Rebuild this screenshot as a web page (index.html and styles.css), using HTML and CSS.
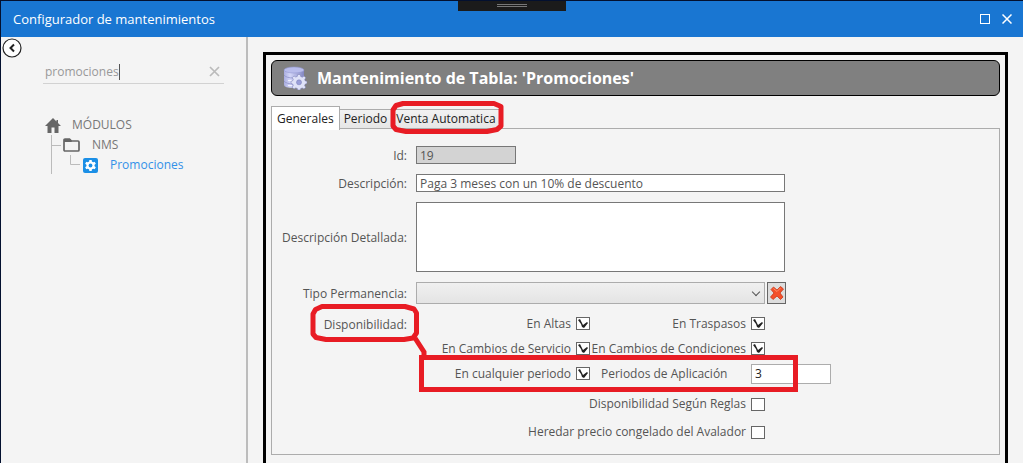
FILE: index.html
```html
<!DOCTYPE html>
<html lang="es">
<head>
<meta charset="utf-8">
<title>Configurador de mantenimientos</title>
<link rel="stylesheet" href="styles.css">
</head>
<body>
<div class="window">
  <header class="titlebar">
    <h1 class="titlebar-text">Configurador de mantenimientos</h1>
    <div class="titlebar-buttons">
      <button class="icon-button" type="button" aria-label="Maximizar"><svg width="10" height="10" viewBox="0 0 10 10"><rect x=".5" y=".5" width="9" height="9" fill="none" stroke="#fff"/></svg></button>
      <button class="icon-button" type="button" aria-label="Cerrar"><svg width="10" height="10" viewBox="0 0 10 10"><path d="M.5 .5L9.500 9.500M9.500 .5L.5 9.500" stroke="#fff" stroke-width="1.500"/></svg></button>
    </div>
    <div class="grip"><span class="grip-line"></span><span class="grip-line"></span></div>
  </header>
  <div class="body">
    <aside class="sidebar">
      <button class="icon-button back" type="button" aria-label="Contraer"><svg width="20" height="20" viewBox="0 0 20 20"><circle cx="10" cy="10" r="9" fill="#fff" stroke="#222" stroke-width="1.200"/><path d="M12 6.500L8.500 10L12 13.500" fill="none" stroke="#222" stroke-width="2"/></svg></button>
      <div class="search">
        <input class="search-input" type="text" value="promociones" aria-label="Buscar"><span class="caret"></span>
        <button class="icon-button clear" type="button" aria-label="Borrar"><svg width="11" height="11" viewBox="0 0 11 11"><path d="M1 1L10 10M10 1L1 10" stroke="#bbb" stroke-width="1.700"/></svg></button>
      </div>
      <ul class="tree">
        <li class="tree-row root"><svg width="16" height="15" viewBox="0 0 16 15"><path d="M8 0L0 8H2.500V15H6.500V9.500H9.500V15H13.500V8H16L13 5V2H11.500V3.500Z" fill="#666"/></svg><span>MÓDULOS</span></li>
        <li class="tree-row folder"><svg width="10" height="20" viewBox="0 0 10 20"><path d="M.5 0V20M.5 10.500H10" fill="none" stroke="#bbb"/></svg><svg width="17" height="14" viewBox="0 0 17 14"><path d="M2 1H6.500L8.500 3H15Q16 3 16 4V12Q16 13 15 13H2Q1 13 1 12V2Q1 1 2 1Z" fill="none" stroke="#666" stroke-width="1.700"/><path d="M1 1H7L9 4H1Z" fill="#666"/></svg><span>NMS</span></li>
        <li class="tree-row leaf"><svg width="30" height="20" viewBox="0 0 30 20"><path d="M.5 0V19M19.500 0V9.500H29" fill="none" stroke="#bbb"/></svg><svg width="15" height="15" viewBox="0 0 15 15"><rect width="15" height="15" rx="2" fill="#1b8fe6"/><g fill="#fff"><circle cx="7.500" cy="7.500" r="4"/><path d="M6.300 2H8.700L9 5H6ZM6.300 13H8.700L9 10H6Z"/><path d="M6.300 2H8.700L9 5H6ZM6.300 13H8.700L9 10H6Z" transform="rotate(60 7.500 7.500)"/><path d="M6.300 2H8.700L9 5H6ZM6.300 13H8.700L9 10H6Z" transform="rotate(120 7.500 7.500)"/></g><circle cx="7.500" cy="7.500" r="1.900" fill="#1b8fe6"/></svg><a class="tree-link" href="#promociones">Promociones</a></li>
      </ul>
    </aside>
    <main class="main">
      <div class="frame">
        <div class="banner">
          <svg width="24" height="24" viewBox="0 0 24 24"><defs><linearGradient id="disk"><stop offset="0" stop-color="#a9addf"/><stop offset=".3" stop-color="#d3d6f8"/><stop offset="1" stop-color="#8286c2"/></linearGradient></defs><path d="M1 4V19Q1 22 11 22T21 19V4Z" fill="url(#disk)"/><ellipse cx="11" cy="4" rx="10" ry="3" fill="#b9bdec" stroke="#9498d2" stroke-width=".6"/><path d="M1 9Q3 12 11 12T21 9M1 15Q3 18 11 18" fill="none" stroke="#9094cc" stroke-width=".8"/><path d="M5 14.500H9M5 19.500H9" stroke="#f0f1ff"/><g fill="#dfe2f8" stroke="#777bb4" stroke-width=".5"><path d="M14.700 8.500H17.300L17.700 10.500L19.300 11.200L21 10L22.800 11.800L21.700 13.500L22.300 15L24 15.300V17.500L22.300 18L21.600 19.600L22.700 21.300L21 23L19.300 22L17.700 22.600L17.300 24H14.700L14.300 22.500L12.700 21.900L11 23L9.200 21.200L10.300 19.500L9.700 18L8 17.500V15.300L9.700 14.800L10.300 13.300L9.200 11.700L11 10L12.700 11L14.300 10.400Z"/><circle cx="16" cy="16.300" r="2.500" fill="#9a9fda"/></g></svg>
          <h2 class="banner-text">Mantenimiento de Tabla: 'Promociones'</h2>
        </div>
        <div class="tabs" role="tablist">
          <button class="tab active" type="button" role="tab" aria-selected="true">Generales</button>
          <button class="tab" type="button" role="tab" aria-selected="false">Periodo</button>
          <button class="tab" type="button" role="tab" aria-selected="false">Venta Automatica</button>
        </div>
        <form class="panel">
          <label class="label" for="id">Id:</label>
          <input class="field short" id="id" type="text" value="19" disabled>
          <label class="label" for="desc">Descripción:</label>
          <input class="field" id="desc" type="text" value="Paga 3 meses con un 10% de descuento">
          <label class="label" for="detail">Descripción Detallada:</label>
          <textarea class="field area" id="detail"></textarea>
          <label class="label" for="stay">Tipo Permanencia:</label>
          <div class="combo-row">
            <select class="combo" id="stay"><option></option></select>
            <button class="remove" type="button" aria-label="Quitar"><svg width="14" height="14" viewBox="0 0 14 14"><path d="M3.500 1L7 4L10.500 .5L13.500 3L10 7L13 11L10.500 13.500L7 10L3 13.500L.5 11L4 7L1 3.500Z" fill="#f4502a" stroke="#c8371b" stroke-width=".8" stroke-linejoin="round"/><path d="M3.500 2.500L7 5.500L10.500 2" fill="none" stroke="#ff9069"/></svg></button>
          </div>
          <span class="label group-label">Disponibilidad:</span>
          <div class="checks">
            <label class="check-label" for="altas">En Altas</label><input class="check" id="altas" type="checkbox" checked>
            <label class="check-label" for="traspasos">En Traspasos</label><input class="check" id="traspasos" type="checkbox" checked>
            <label class="check-label" for="servicio">En Cambios de Servicio</label><input class="check" id="servicio" type="checkbox" checked>
            <label class="check-label" for="condiciones">En Cambios de Condiciones</label><input class="check" id="condiciones" type="checkbox" checked>
            <label class="check-label" for="cualquier">En cualquier periodo</label><input class="check" id="cualquier" type="checkbox" checked>
            <label class="check-label start" for="periodos">Periodos de Aplicación</label><input class="number" id="periodos" type="text" value="3">
            <label class="check-label wide" for="reglas">Disponibilidad Según Reglas</label><input class="check" id="reglas" type="checkbox">
            <label class="check-label wide" for="heredar">Heredar precio congelado del Avalador</label><input class="check" id="heredar" type="checkbox">
          </div>
        </form>
      </div>
    </main>
  </div>
  <svg class="marks" width="1023" height="463" viewBox="0 0 1023 463" fill="none" stroke="#e81c24" stroke-width="5">
    <path d="M403 103.500H494L501 106.500V126L497 129.500L487 131.500H406L396 129.500L393 126V110L396 105.500Z" stroke-linejoin="round"/>
    <path d="M322 306.500H405L414 309L416.500 313V333L413 338L404 339.500H326L316 337.500L313 334V314L315.500 309.500Z" stroke-linejoin="round"/>
    <path d="M415 338L424 352V357"/>
    <rect x="421.500" y="357.500" width="374" height="32"/>
  </svg>
</div>
</body>
</html>
```
FILE: styles.css
```css
* { box-sizing: border-box; }
body { margin: 0; font-family: "Open Sans", "Noto Sans", sans-serif; font-size: 12px; line-height: 16px; color: #555; }
h1, h2, ul { margin: 0; padding: 0; }
button, input, select, textarea { font: inherit; color: inherit; margin: 0; border-radius: 0; outline: 0; }
.window { position: relative; display: flex; flex-direction: column; height: 100vh; overflow: hidden; background: #f4f4f4; border-top: 1px solid #03102f; border-left: 1px solid #03102f; }
.titlebar { position: relative; display: flex; align-items: center; justify-content: space-between; height: 36px; padding: 0 11px 0 12px; background: #1976d2; color: #fff; }
.titlebar-text { font-size: 13px; font-weight: 400; line-height: 20px; }
.titlebar-buttons { display: flex; gap: 12px; }
.icon-button { display: flex; padding: 0; border: 0; background: none; }
.grip { position: absolute; top: -1px; left: 457px; width: 108px; height: 11px; display: flex; flex-direction: column; align-items: center; gap: 1px; padding-top: 4px; background: #1b1b1b; }
.grip-line { width: 30px; height: 1px; background: #777; }
.body { display: flex; flex: 1; min-height: 0; }
.sidebar { width: 247px; flex: none; padding: 1px 22px 0 1px; border-right: 2px solid #bcbcbc; }
.search { display: flex; align-items: center; height: 24px; margin: 2px 0 0 41px; padding: 0 4px 0 2px; border-bottom: 1px solid #d2d2d2; color: #999; }
.search-input { field-sizing: content; padding: 0; border: 0; background: none; }
.caret { width: 1px; height: 16px; background: #555; }
.clear { margin-left: auto; }
.tree { margin: 31px 0 0 43px; list-style: none; color: #777; }
.tree-row { display: flex; align-items: center; height: 20px; }
.root { gap: 11px; }
.folder { padding-left: 6px; gap: 2px; }
.folder span { padding-left: 10px; }
.leaf { padding-left: 6px; gap: 2px; }
.tree-link { padding-left: 10px; color: #3391e8; text-decoration: none; }
.main { display: flex; flex: 1; min-width: 0; padding: 15px 15px 0; }
.frame { flex: 1; min-width: 0; padding: 5px; border: 3px solid #000; border-bottom: 0; }
.banner { display: flex; align-items: center; gap: 10px; height: 36px; padding: 0 11px; border: 1px solid #000; border-radius: 6px; background: #808080; color: #fff; }
.banner-text { font-size: 16px; line-height: 24px; font-weight: 700; }
.tabs { display: flex; align-items: flex-end; height: 24px; margin-top: 9px; color: #222; }
.tab { height: 20px; padding: 0 4px; border: 1px solid #acacac; border-left: 0; background: linear-gradient(#f2f2f2, #e6e6e6); white-space: nowrap; }
.tab.active { z-index: 1; height: 24px; padding: 0 5px; margin-bottom: -1px; border-left: 1px solid #acacac; border-bottom: 0; background: #fff; }
.panel { display: grid; grid-template-columns: 135px 1fr; column-gap: 9px; row-gap: 10px; align-items: center; justify-items: start; margin-top: -1px; padding: 17px 0 10px; border: 1px solid #acacac; }
.label { justify-self: end; padding-top: 1px; white-space: nowrap; }
.field { width: 369px; height: 18px; padding: 0 3px; border: 1px solid #777; background: #fff; }
.short { width: 100px; background: #d3d3d3; }
.area { display: block; height: 70px; resize: none; }
.combo-row { position: relative; display: flex; gap: 2px; }
.combo { appearance: none; width: 349px; height: 22px; border: 1px solid #acacac; background: linear-gradient(#f0f0f0, #e4e4e4); }
.combo-row::before { content: ""; position: absolute; left: 337px; top: 7px; width: 5px; height: 5px; border: solid #555; border-width: 0 1px 1px 0; transform: rotate(45deg); pointer-events: none; }
.remove { display: flex; align-items: center; justify-content: center; width: 19px; height: 22px; padding: 0; border: 1px solid #666; background: #ddd; }
.group-label { align-self: start; padding-top: 3px; }
.checks { display: grid; grid-template-columns: 155px 14px 151px 80px; grid-template-rows: repeat(3, 25px) 36px 20px; column-gap: 5px; align-items: center; margin: -3px 0 2px; }
.check-label { justify-self: end; white-space: nowrap; }
.check-label.start { justify-self: start; padding-left: 6px; }
.check-label.wide { grid-column: 1 / 4; }
.check { appearance: none; width: 14px; height: 13px; border: 1px solid #666; background: #fff; }
.check:checked::before { content: ""; display: block; width: 12px; height: 11px; background: #222; clip-path: polygon(1px 2px, 3px 1px, 6px 7px, 10px 4px, 11px 5px, 7px 10px, 5px 9px, 4px 6px); }
.number { width: 80px; height: 20px; padding: 0 3px; border: 1px solid #acacac; background: #fff; color: #222; }
.marks { position: absolute; top: -1px; left: -1px; pointer-events: none; }
```
